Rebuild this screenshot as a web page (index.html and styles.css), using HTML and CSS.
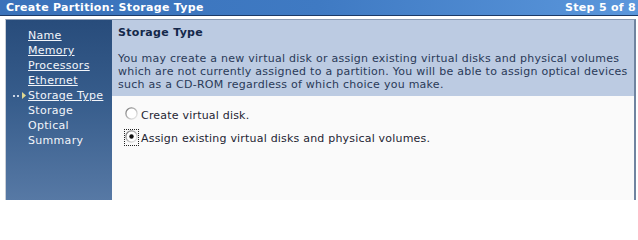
FILE: index.html
```html
<!DOCTYPE html>
<html>
<head>
<meta charset="utf-8">
<link rel="stylesheet" href="styles.css">
</head>
<body>
<div class="titlebar">
  <span class="title">Create Partition: Storage Type</span>
  <span class="step">Step 5 of 8</span>
</div>
<div class="frame">
  <nav class="nav">
    <a class="item link" href="#">Name</a>
    <a class="item link" href="#">Memory</a>
    <a class="item link" href="#">Processors</a>
    <a class="item link" href="#">Ethernet</a>
    <a class="item link current" href="#"><span class="marker"><span class="dot"></span><span class="dot"></span><svg class="tri" width="4" height="7" viewBox="0 0 4 7"><path d="M0 0 L4 3.5 L0 7 Z" fill="#e0d890"/></svg></span>Storage Type</a>
    <span class="item">Storage</span>
    <span class="item">Optical</span>
    <span class="item">Summary</span>
  </nav>
  <main class="main">
    <section class="header">
      <h1 class="heading">Storage Type</h1>
      <p class="desc">You may create a new virtual disk or assign existing virtual disks and physical volumes which are not currently assigned to a partition. You will be able to assign optical devices such as a CD-ROM regardless of which choice you make.</p>
    </section>
    <section class="options">
      <label class="option">
        <svg class="radio" width="13" height="13" viewBox="0 0 13 13">
          <defs>
            <linearGradient id="rg" x1="0" y1="0" x2="1" y2="1">
              <stop offset="0" stop-color="#707070"/>
              <stop offset="0.55" stop-color="#bdbdbd"/>
              <stop offset="1" stop-color="#f2f2f2"/>
            </linearGradient>
          </defs>
          <circle cx="6.5" cy="6.5" r="5.6" fill="#ffffff" stroke="url(#rg)" stroke-width="1.3"/>
        </svg>
        <span class="label">Create virtual disk.</span>
      </label>
      <label class="option">
        <span class="focus">
          <svg class="radio" width="13" height="13" viewBox="0 0 13 13">
            <circle cx="6.5" cy="6.5" r="5.6" fill="#ffffff" stroke="url(#rg)" stroke-width="1.3"/>
            <circle cx="6.5" cy="6.5" r="2.2" fill="#111111"/>
          </svg>
        </span>
        <span class="label">Assign existing virtual disks and physical volumes.</span>
      </label>
    </section>
  </main>
</div>
</body>
</html>
```
FILE: styles.css
```css
html, body {
  margin: 0;
  padding: 0;
  height: 200px;
  background: #ffffff;
  font-family: "DejaVu Sans", Verdana, sans-serif;
  overflow: hidden;
}
.titlebar {
  height: 15px;
  display: flex;
  justify-content: space-between;
  align-items: center;
  background: linear-gradient(to right, #3a72ba 0%, #3f7ac3 50%, #5b97dc 100%);
  border-bottom: 1px solid #1d3a66;
  color: #ffffff;
  font-weight: bold;
  font-size: 11px;
  letter-spacing: 0.3px;
  padding: 0 2px 0 6px;
}
.frame {
  margin: 3px 2px 0 5px;
  height: 181px;
  display: flex;
  border-left: 1px solid #c9ced6;
  border-right: 2px solid #6f84a0;
  border-top: 1px solid #8b9bb3;
}
.nav {
  width: 106px;
  flex: none;
  display: flex;
  flex-direction: column;
  padding-top: 8px;
  box-sizing: border-box;
  background: linear-gradient(to bottom, #284c7b 0%, #375d8c 45%, #5779a5 100%);
}
.item {
  position: relative;
  display: block;
  height: 15px;
  line-height: 15px;
  padding-left: 22px;
  color: #f2f5fa;
  font-size: 11px;
  letter-spacing: 0.3px;
  text-decoration: none;
  white-space: nowrap;
}
.link {
  text-decoration: underline;
}
.marker {
  position: absolute;
  left: 7px;
  top: 4px;
  display: flex;
  align-items: center;
  gap: 2px;
}
.dot {
  width: 2px;
  height: 2px;
  background: #c8d4e4;
}
.tri {
  margin-left: 1px;
}
.main {
  flex: 1;
  display: flex;
  flex-direction: column;
  background: #fafafa;
}
.header {
  background: #bccbe2;
  height: 76px;
  padding: 6px 0 0 6px;
  box-sizing: border-box;
  color: #1a2b48;
}
.heading {
  margin: 0;
  font-size: 11px;
  font-weight: bold;
  letter-spacing: 0.3px;
  line-height: 14px;
  color: #14284a;
}
.desc {
  margin: 12px 0 0 0;
  font-size: 11px;
  letter-spacing: 0.26px;
  line-height: 13px;
  color: #2a3a58;
}
.options {
  padding: 11px 0 0 13px;
  display: flex;
  flex-direction: column;
  gap: 8px;
}
.option {
  display: flex;
  align-items: flex-end;
  font-size: 11px;
  letter-spacing: 0.2px;
  line-height: 13px;
  color: #1e2533;
}
.radio {
  display: block;
  margin-bottom: 2px;
}
.focus {
  outline: 1px dotted #222;
  outline-offset: 0;
}
.label {
  margin-left: 3px;
}
```
